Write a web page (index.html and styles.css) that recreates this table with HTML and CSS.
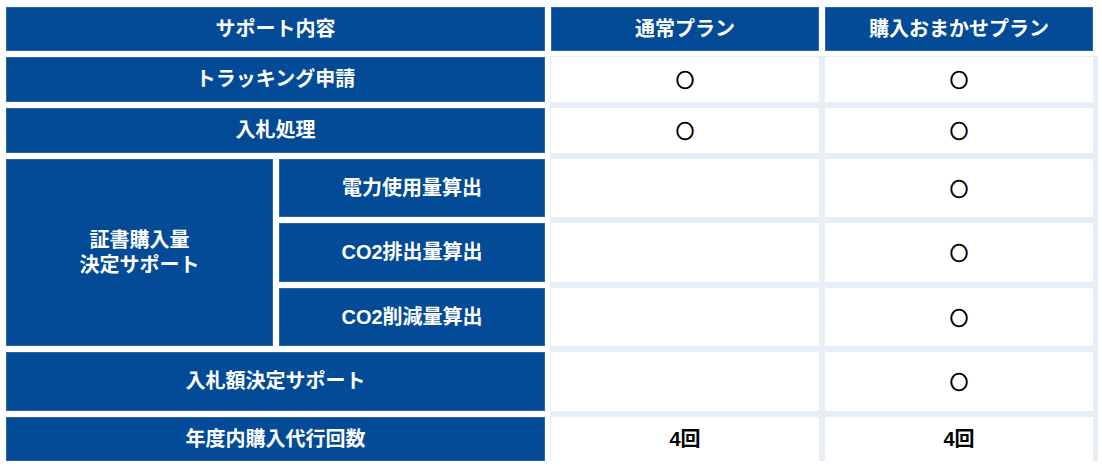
FILE: index.html
```html
<!DOCTYPE html>
<html lang="ja">
<head>
<meta charset="utf-8">
<title>サポート内容</title>
<link rel="stylesheet" href="styles.css">
</head>
<body>
<div class="compare">
  <div class="cell head span2">サポート内容</div>
  <div class="cell head">通常プラン</div>
  <div class="cell head">購入おまかせプラン</div>

  <div class="cell label span2">トラッキング申請</div>
  <div class="cell val">○</div>
  <div class="cell val">○</div>

  <div class="cell label span2">入札処理</div>
  <div class="cell val">○</div>
  <div class="cell val">○</div>

  <div class="cell label rowspan3">証書購入量<br>決定サポート</div>
  <div class="cell label">電力使用量算出</div>
  <div class="cell val"></div>
  <div class="cell val">○</div>

  <div class="cell label">CO2排出量算出</div>
  <div class="cell val"></div>
  <div class="cell val">○</div>

  <div class="cell label">CO2削減量算出</div>
  <div class="cell val"></div>
  <div class="cell val">○</div>

  <div class="cell label span2">入札額決定サポート</div>
  <div class="cell val"></div>
  <div class="cell val">○</div>

  <div class="cell label span2">年度内購入代行回数</div>
  <div class="cell val num">4回</div>
  <div class="cell val num">4回</div>
</div>
</body>
</html>
```

FILE: styles.css
```css
html, body {
  margin: 0;
  padding: 0;
  background: #ffffff;
}

body {
  font-family: "Liberation Sans", "Noto Sans CJK JP", sans-serif;
  font-weight: 700;
}

.compare {
  display: grid;
  grid-template-columns: 267px 266px 268px 268px;
  grid-template-rows: 44px 45px 45px 58px 59px 58px 59px 44px;
  gap: 6px;
  padding: 7px 0 0 6px;
  width: max-content;
}

.cell {
  display: flex;
  align-items: center;
  justify-content: center;
  text-align: center;
  font-size: 20px;
  line-height: 25px;
}

.head,
.label {
  background: #034b97;
  color: #ffffff;
  box-shadow: inset 0 0 0 1px #2b66a6;
}

.span2 {
  grid-column: span 2;
}

.rowspan3 {
  grid-row: span 3;
}

.val {
  background: #ffffff;
  color: #000000;
  box-shadow: 2px 2px 0 3px #e8eef6;
  font-family: "Noto Sans CJK JP", sans-serif;
  font-size: 18px;
  font-weight: 700;
  -webkit-text-stroke: 1px #000000;
}

.num {
  font-family: "Liberation Sans", "Noto Sans CJK JP", sans-serif;
  font-weight: 700;
  font-size: 20px;
  -webkit-text-stroke: 0;
}
```
